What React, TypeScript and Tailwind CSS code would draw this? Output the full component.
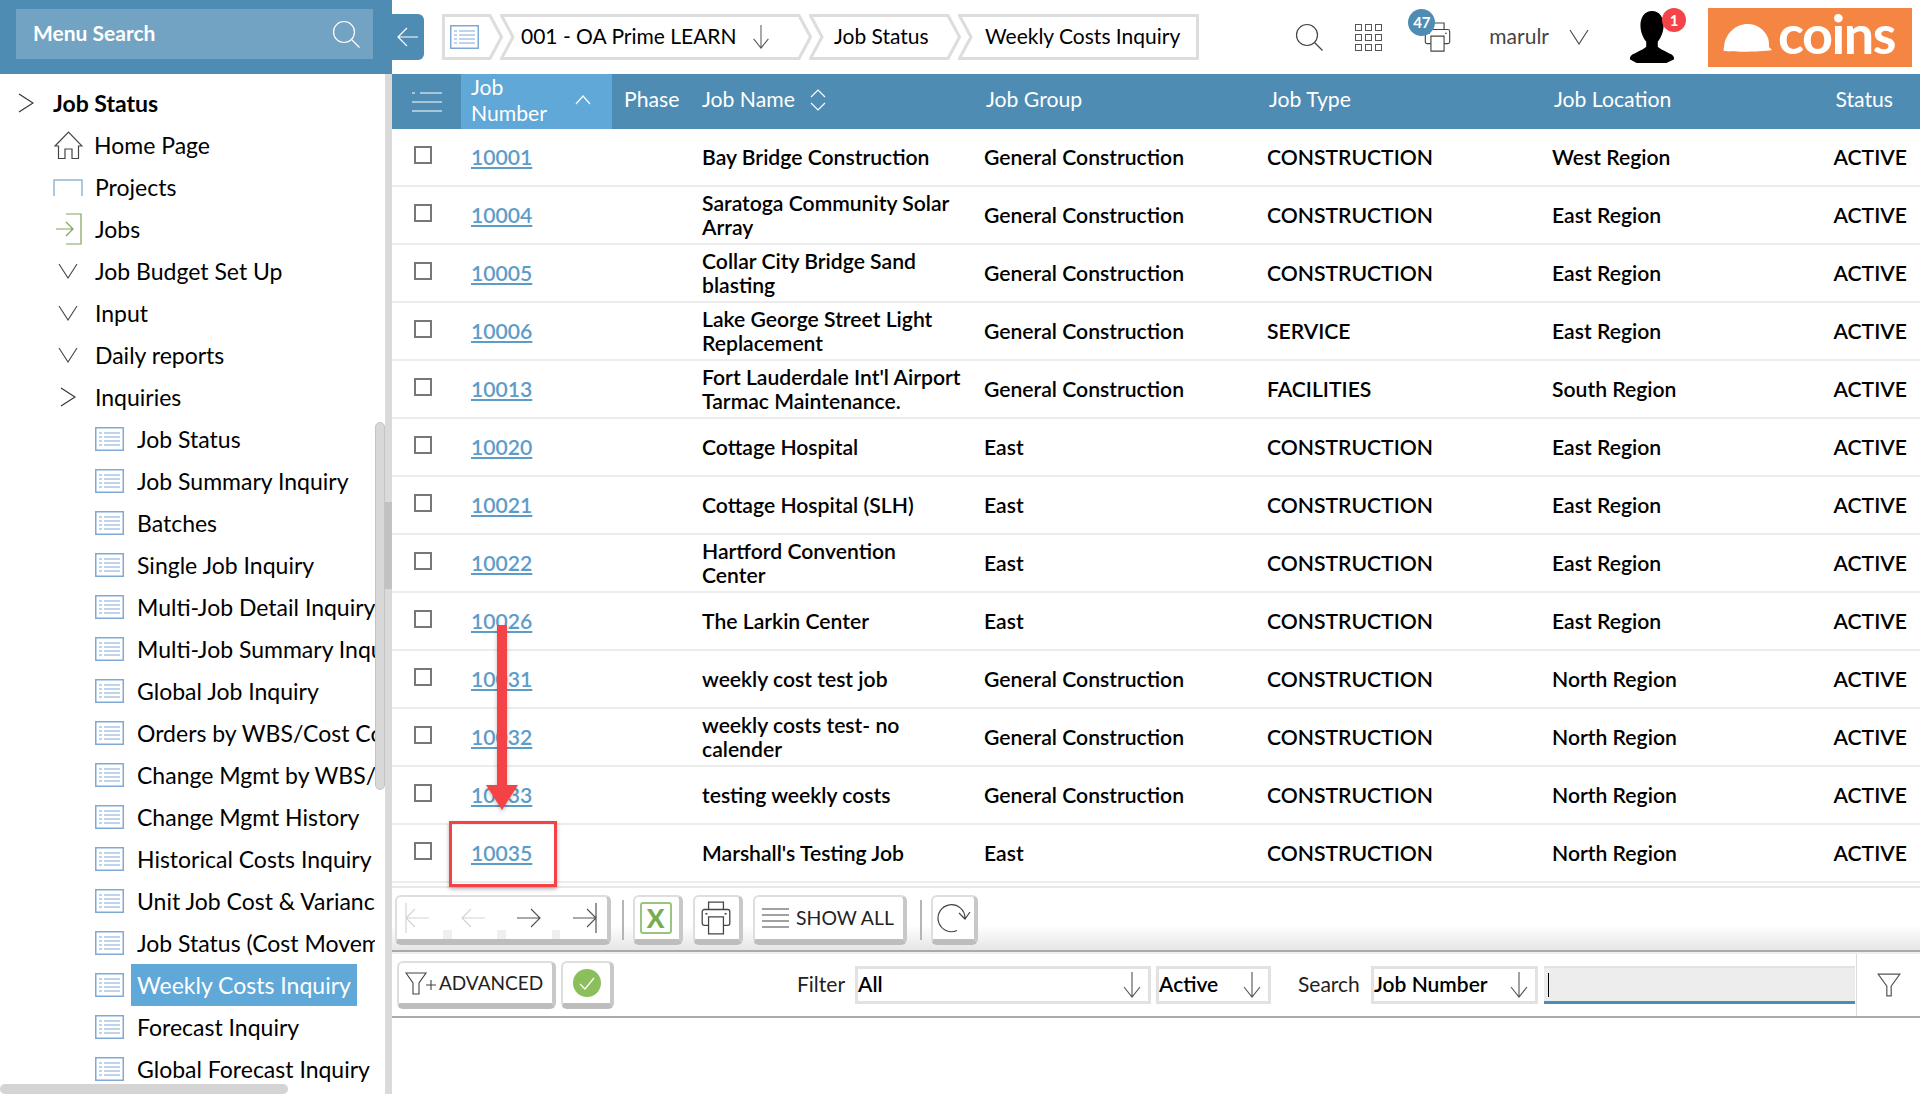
import React from 'react';

const ROW_GRID = 'grid grid-cols-[69px_151px_78px_282px_283px_285px_280px_1fr]';

const JOBS = [
  { no: '10001', name: 'Bay Bridge Construction', group: 'General Construction', type: 'CONSTRUCTION', loc: 'West Region' },
  { no: '10004', name: 'Saratoga Community Solar Array', group: 'General Construction', type: 'CONSTRUCTION', loc: 'East Region' },
  { no: '10005', name: 'Collar City Bridge Sand blasting', group: 'General Construction', type: 'CONSTRUCTION', loc: 'East Region' },
  { no: '10006', name: 'Lake George Street Light Replacement', group: 'General Construction', type: 'SERVICE', loc: 'East Region' },
  { no: '10013', name: "Fort Lauderdale Int'l Airport Tarmac Maintenance.", group: 'General Construction', type: 'FACILITIES', loc: 'South Region' },
  { no: '10020', name: 'Cottage Hospital', group: 'East', type: 'CONSTRUCTION', loc: 'East Region' },
  { no: '10021', name: 'Cottage Hospital (SLH)', group: 'East', type: 'CONSTRUCTION', loc: 'East Region' },
  { no: '10022', name: 'Hartford Convention Center', group: 'East', type: 'CONSTRUCTION', loc: 'East Region' },
  { no: '10026', name: 'The Larkin Center', group: 'East', type: 'CONSTRUCTION', loc: 'East Region' },
  { no: '10031', name: 'weekly cost test job', group: 'General Construction', type: 'CONSTRUCTION', loc: 'North Region' },
  { no: '10032', name: 'weekly costs test- no calender', group: 'General Construction', type: 'CONSTRUCTION', loc: 'North Region' },
  { no: '10033', name: 'testing weekly costs', group: 'General Construction', type: 'CONSTRUCTION', loc: 'North Region' },
  { no: '10035', name: "Marshall's Testing Job", group: 'East', type: 'CONSTRUCTION', loc: 'North Region' },
];

const INQUIRIES = [
  'Job Status',
  'Job Summary Inquiry',
  'Batches',
  'Single Job Inquiry',
  'Multi-Job Detail Inquiry',
  'Multi-Job Summary Inquiry',
  'Global Job Inquiry',
  'Orders by WBS/Cost Code',
  'Change Mgmt by WBS/Cost Code',
  'Change Mgmt History',
  'Historical Costs Inquiry',
  'Unit Job Cost & Variance',
  'Job Status (Cost Movement)',
  'Weekly Costs Inquiry',
  'Forecast Inquiry',
  'Global Forecast Inquiry',
];

const ChevronRight = () => (
  <svg width="16" height="20" viewBox="0 0 16 20" fill="none" stroke="#333" strokeWidth="1.2">
    <path d="M1 1l14 9-14 9" />
  </svg>
);

const ChevronDown = ({ w = 20, h = 16, color = '#444' }: { w?: number; h?: number; color?: string }) => (
  <svg width={w} height={h} viewBox="0 0 20 16" fill="none" stroke={color} strokeWidth="1.1">
    <path d="M1 1l9 14 9-14" />
  </svg>
);

const ArrowDown = ({ w = 18, h = 26 }: { w?: number; h?: number }) => (
  <svg width={w} height={h} viewBox="0 0 18 26" fill="none" stroke="#555" strokeWidth="1.1">
    <path d="M9 0v25M1 15l8 10 8-10" />
  </svg>
);

const ListIcon = ({ w = 29, h = 24 }: { w?: number; h?: number }) => (
  <svg width={w} height={h} viewBox="0 0 29 24" fill="none" stroke="#7fa9d6" strokeWidth="1" className="shrink-0">
    <rect x="0.75" y="0.75" width="27.5" height="22.5" strokeWidth="1.5" />
    <path d="M4 6h3M9 6h16M4 10h3M9 10h16M4 14h3M9 14h16M4 18h3M9 18h16" />
  </svg>
);

const SearchIcon = ({ color, size = 28 }: { color: string; size?: number }) => (
  <svg width={size} height={size} viewBox="0 0 28 28" fill="none" stroke={color} strokeWidth="1.2">
    <circle cx="12" cy="12" r="10.5" />
    <path d="M19.5 19.5l8 8" />
  </svg>
);

const PrinterIcon = ({ w = 29, h = 30 }: { w?: number; h?: number }) => (
  <svg width={w} height={h} viewBox="0 0 28 32" fill="none" stroke="#444" strokeWidth="1.2">
    <path d="M7 8V1h14v7M7 23H3a2 2 0 0 1-2-2V10a2 2 0 0 1 2-2h22a2 2 0 0 1 2 2v11a2 2 0 0 1-2 2h-4" />
    <path d="M7 15h14v16H7z" />
    <path d="M4 12h2M22 12h2" />
  </svg>
);

const FunnelIcon = ({ size = 22 }: { size?: number }) => (
  <svg width={size} height={size} viewBox="0 0 22 22" fill="none" stroke="#555" strokeWidth="1.1">
    <path d="M1 1h20l-8 11v9H9v-9z" />
  </svg>
);

const Crumb = ({ width, first, last, children }: { width: number; first?: boolean; last?: boolean; children?: React.ReactNode }) => {
  const right = last
    ? `${width - 1.5},1.5 ${width - 1.5},44.5`
    : `${width - 13},1.5 ${width - 1.5},23 ${width - 13},44.5`;
  const pts = first ? `1.5,1.5 ${right} 1.5,44.5` : `1.5,1.5 ${right} 1.5,44.5 13,23`;
  return (
    <div className="relative h-[46px] flex items-center shrink-0 -mr-[3px]" style={{ width }}>
      <svg className="absolute inset-0" width={width} height={46} fill="white" stroke="#dddddd" strokeWidth="3">
        <polygon points={pts} />
      </svg>
      <div className="relative flex items-center">{children}</div>
    </div>
  );
};

const Btn = ({ className = '', children }: { className?: string; children: React.ReactNode }) => (
  <div className={`relative flex items-center justify-center bg-white rounded-[6px] border-2 border-[#dedede] border-b-[6px] border-b-[#bdbdbd] border-r-[4px] border-r-[#c8c8c8] ${className}`}>
    {children}
  </div>
);

const Select = ({ label, className }: { label: string; className: string }) => (
  <div className={`h-[38px] flex items-center justify-between border-[3px] border-[#e2e2e2] pl-0 pr-[7px] text-[21px] font-semibold text-black ${className}`}>
    <span className="-mt-[2px]">{label}</span>
    <ArrowDown />
  </div>
);

const Sidebar = () => (
  <aside className="w-[392px] shrink-0 h-full flex flex-col relative">
    <div className="h-[74px] shrink-0 bg-[#4f8cb3] pl-4 pr-[19px] pt-[9px]">
      <div className="h-[50px] bg-[#72a3c2] flex items-center justify-between pl-[17px] pr-[13px]">
        <span className="text-[21px] font-bold text-white -mt-[3px]">Menu Search</span>
        <SearchIcon color="#ffffff" size={28} />
      </div>
    </div>
    <div className="flex-1 flex min-h-0">
      <nav className="w-[375px] overflow-hidden pt-[8px] text-[23px] text-black">
        <div className="h-[42px] flex items-center whitespace-nowrap">
          <span className="ml-[18px] w-[35px] flex"><ChevronRight /></span>
          <span className="font-bold">Job Status</span>
        </div>
        <div className="h-[42px] flex items-center whitespace-nowrap pl-[54px]">
          <svg width="29" height="29" viewBox="0 0 29 29" fill="none" stroke="#444" strokeWidth="1.2" className="mr-[11px]">
            <path d="M1 15L14.5 1 28 15h-3.5v12.5H18V18h-7v9.500H4.500V15z" />
          </svg>
          Home Page
        </div>
        <div className="h-[42px] flex items-center whitespace-nowrap pl-[53px]">
          <svg width="30" height="17" viewBox="0 0 30 17" fill="none" stroke="#8fb6d6" strokeWidth="1.5" className="mr-[12px]">
            <path d="M1 17V1h28v16" />
          </svg>
          Projects
        </div>
        <div className="h-[42px] flex items-center whitespace-nowrap pl-[55px]">
          <svg width="27" height="32" viewBox="0 0 27 32" fill="none" stroke="#7ea35c" strokeWidth="1.2" className="mr-[13px]">
            <path d="M11 1h15v30H11M1 16h17M11 9l7 7-7 7" />
          </svg>
          Jobs
        </div>
        {['Job Budget Set Up', 'Input', 'Daily reports'].map(t => (
          <div key={t} className="h-[42px] flex items-center whitespace-nowrap pl-[58px]">
            <span className="w-[37px] flex"><ChevronDown /></span>
            {t}
          </div>
        ))}
        <div className="h-[42px] flex items-center whitespace-nowrap pl-[60px]">
          <span className="w-[35px] flex"><ChevronRight /></span>
          Inquiries
        </div>
        {INQUIRIES.map(t => (
          <div key={t} className="h-[42px] flex items-center whitespace-nowrap pl-[95px]">
            <ListIcon />
            {t === 'Weekly Costs Inquiry' ? (
              <span className="ml-[7px] h-[42px] w-[226px] shrink-0 flex items-center pl-[6px] bg-[#5fa8d8] text-white">{t}</span>
            ) : (
              <span className="ml-[13px]">{t}</span>
            )}
          </div>
        ))}
      </nav>
      <div className="w-[10px] pt-[348px]">
        <div className="h-[368px] bg-[#d8d8d8] border border-[#c4c4c4] rounded-[5px]" />
      </div>
      <div className="w-[7px] bg-[#dadada] pt-[428px]">
        <div className="h-[87px] bg-[#c2c2c2]" />
      </div>
    </div>
    <div className="absolute left-0 bottom-0 w-[288px] h-[10px] bg-[#d4d4d4] rounded-[5px]" />
  </aside>
);

const TopBar = () => (
  <header className="h-[74px] shrink-0 flex items-center relative">
    <div className="w-[32px] h-[46px] bg-[#4f8cb3] rounded-r-[6px] flex items-center justify-center">
      <svg width="22" height="20" viewBox="0 0 22 20" fill="none" stroke="white" strokeWidth="1.2">
        <path d="M21 10H1M10 1l-9 9 9 9" />
      </svg>
    </div>
    <div className="ml-[18px] flex items-center">
      <Crumb width={61} first>
        <span className="ml-[8px] flex"><ListIcon w={29} h={24} /></span>
      </Crumb>
      <Crumb width={312}>
        <span className="ml-[21px] text-[21px] text-black -mt-[2px]">001 - OA Prime LEARN</span>
        <span className="ml-[15px] flex"><ArrowDown w={18} h={24} /></span>
      </Crumb>
      <Crumb width={152}>
        <span className="ml-[25px] text-[21px] text-black -mt-[2px]">Job Status</span>
      </Crumb>
      <Crumb width={241} last>
        <span className="ml-[27px] text-[21px] text-black -mt-[2px]">Weekly Costs Inquiry</span>
      </Crumb>
    </div>
    <div className="ml-auto flex items-center mr-[8px]">
      <SearchIcon color="#444" />
      <div className="ml-[32px] grid grid-cols-3 gap-[3px]">
        {Array.from({ length: 9 }).map((_, i) => (
          <span key={i} className="w-[7px] h-[7px] border border-[#555]" />
        ))}
      </div>
      <div className="ml-[41px] relative">
        <PrinterIcon />
        <span className="absolute -left-[15px] -top-[13px] w-[27px] h-[27px] rounded-full bg-[#4f8cb3] text-white text-[15px] font-bold flex items-center justify-center">47</span>
      </div>
      <span className="ml-[37px] text-[21px] text-[#444] -mt-[2px]">marulr</span>
      <span className="ml-[20px] flex"><ChevronDown /></span>
      <div className="ml-[40px] relative">
        <svg width="46" height="52" viewBox="0 0 46 54" fill="black">
          <path d="M23 0c8 0 12 7 12 15 0 7-3 13-6 17v5c3 3 9 5 14 8 2 1 3 3 3 5l-8 4H7l-7-4c0-2 1-4 3-5 5-3 11-5 14-8v-5c-3-4-6-10-6-17C11 7 15 0 23 0z" />
        </svg>
        <span className="absolute left-[33px] -top-[3px] w-[24px] h-[24px] rounded-full bg-[#f4444a] text-white text-[15px] font-bold flex items-center justify-center">1</span>
      </div>
      <div className="ml-[33px] w-[204px] h-[59px] bg-[#f58543] flex items-center pl-[15px] text-white overflow-hidden">
        <svg width="50" height="29" viewBox="0 0 50 29" fill="white" className="shrink-0">
          <path d="M1 28c-1-1 0-3 0-4C2 11 12 1 25 1c9 0 17 6 20 14 1 3 1 6 1 9l3 3c-10 2-38 2-48 1z" />
        </svg>
        <span className="ml-[5px] text-[54px] leading-[59px] font-bold tracking-[-1.5px] -mt-[8px]">coins</span>
      </div>
    </div>
  </header>
);

const JobTable = () => (
  <div className="shrink-0">
    <div className={`${ROW_GRID} h-[55px] bg-[#4f8cb3] text-white text-[21.2px] items-center`}>
      <div className="flex justify-center">
        <svg width="30" height="20" viewBox="0 0 30 20" fill="none" stroke="white" strokeWidth="1.2">
          <path d="M0 1h3M8 1h22M0 10h30M0 19h30" />
        </svg>
      </div>
      <div className="h-[55px] bg-[#5fa8d8] pl-[10px] pr-[21px] flex items-center justify-between leading-[26px]">
        <span className="w-[70px] -mt-[3px]">Job Number</span>
        <svg width="16" height="10" viewBox="0 0 16 10" fill="none" stroke="white" strokeWidth="1.2" className="-mt-[4px]">
          <path d="M1 9l7-8 7 8" />
        </svg>
      </div>
      <div className="pl-[12px] -mt-[3px]">Phase</div>
      <div className="pl-[12px] flex items-center gap-[15px] -mt-[3px]">
        Job Name
        <svg width="16" height="22" viewBox="0 0 16 22" fill="none" stroke="white" strokeWidth="1.2">
          <path d="M1 8l7-7 7 7M1 14l7 7 7-7" />
        </svg>
      </div>
      <div className="pl-[14px] -mt-[3px]">Job Group</div>
      <div className="pl-[14px] -mt-[3px]">Job Type</div>
      <div className="pl-[14px] -mt-[3px]">Job Location</div>
      <div className="text-right pr-[27px] -mt-[3px]">Status</div>
    </div>
    {JOBS.map(j => (
      <div key={j.no} className={`${ROW_GRID} h-[58px] items-center border-b-2 border-[#ececec] text-[21.15px] leading-[24px] font-semibold text-black`}>
        <div className="flex pl-[22px] -mt-[4px]">
          <span className="w-[18px] h-[18px] border-2 border-[#777] bg-white" />
        </div>
        <a href="#" className="pl-[10px] text-[#5e9cc8] underline">{j.no}</a>
        <div />
        <div className="pl-[12px] pr-[10px]">{j.name}</div>
        <div className="pl-[12px]">{j.group}</div>
        <div className="pl-[12px]">{j.type}</div>
        <div className="pl-[12px]">{j.loc}</div>
        <div className="text-right pr-[13px]">ACTIVE</div>
      </div>
    ))}
  </div>
);

const Toolbar = () => (
  <div className="mt-[3px] h-[66px] shrink-0 flex items-center pl-[3px] pt-[2px] bg-gradient-to-b from-white from-60% to-[#e6e6e6] border-t-2 border-t-[#e8e8e8] border-b-2 border-[#aaaaaa]">
    <Btn className="w-[216px] h-[50px]">
      <div className="w-full flex items-center justify-between pl-[8px] pr-[10px]">
        <svg width="24" height="30" viewBox="0 0 24 30" fill="none" stroke="#d4d4d4" strokeWidth="1.2"><path d="M1 0v30M24 15H1M10 6l-9 9 9 9" /></svg>
        <svg width="24" height="22" viewBox="0 0 24 22" fill="none" stroke="#d4d4d4" strokeWidth="1.2"><path d="M24 11H1M10 2l-9 9 9 9" /></svg>
        <svg width="24" height="22" viewBox="0 0 24 22" fill="none" stroke="#555" strokeWidth="1.2"><path d="M0 11h23M14 2l9 9-9 9" /></svg>
        <svg width="24" height="30" viewBox="0 0 24 30" fill="none" stroke="#555" strokeWidth="1.2"><path d="M23 0v30M0 15h23M14 6l9 9-9 9" /></svg>
      </div>
      <span className="absolute left-[46px] bottom-0 w-[9px] h-[9px] bg-[#efefef]" />
      <span className="absolute left-[100px] bottom-0 w-[9px] h-[9px] bg-[#efefef]" />
      <span className="absolute left-[155px] bottom-0 w-[8px] h-[9px] bg-[#efefef]" />
    </Btn>
    <span className="ml-[11px] w-[2px] h-[40px] bg-[#b5b5b5]" />
    <Btn className="ml-[9px] w-[50px] h-[50px]">
      <span className="mr-[3px] w-[32px] h-[32px] border-2 border-[#9ac57e] rounded-[3px] flex items-center justify-center text-[#78ad4e] text-[26px] font-black leading-none">X</span>
    </Btn>
    <Btn className="ml-[10px] w-[50px] h-[50px]"><span className="mr-[3px] flex"><PrinterIcon w={30} h={34} /></span></Btn>
    <Btn className="ml-[10px] w-[154px] h-[50px] gap-[7px] pr-[2px] text-[19.400px] text-[#222]">
      <svg width="27" height="22" viewBox="0 0 27 22" fill="none" stroke="#444" strokeWidth="1.2"><path d="M0 2h27M0 8h27M0 14h27M0 20h27" /></svg>
      SHOW ALL
    </Btn>
    <span className="ml-[13px] w-[2px] h-[40px] bg-[#b5b5b5]" />
    <Btn className="ml-[9px] w-[47px] h-[50px]">
      <svg width="34" height="30" viewBox="0 0 34 30" fill="none" stroke="#444" strokeWidth="1.2"><path d="M20 27.500A13.500 13.500 0 1 1 28 15M22 10l6 6 5-7" /></svg>
    </Btn>
  </div>
);

const FilterBar = () => (
  <div className="h-[66px] shrink-0 flex items-center border-t-2 border-t-[#eeeeee] border-b-2 border-[#aaaaaa] pl-[5px]">
    <Btn className="w-[159px] h-[48px] gap-[2px] pr-[3px] text-[19px] text-[#222]">
      <svg width="32" height="24" viewBox="0 0 32 24" fill="none" stroke="#444" strokeWidth="1.1"><path d="M1 2h20l-7 10v11H8V12zM21 14h10M26 9v10" /></svg>
      ADVANCED
    </Btn>
    <Btn className="ml-[5px] w-[53px] h-[48px]">
      <span className="w-[28px] h-[28px] rounded-full bg-[#8bbf5c] flex items-center justify-center">
        <svg width="16" height="13" viewBox="0 0 16 13" fill="none" stroke="white" strokeWidth="1.2"><path d="M1 7l5 5 9-11" /></svg>
      </span>
    </Btn>
    <span className="ml-[183px] w-[58px] text-[21px] text-[#222] -mt-[2px]">Filter</span>
    <Select label="All" className="w-[296px]" />
    <Select label="Active" className="ml-[5px] w-[115px]" />
    <span className="ml-[27px] w-[73px] text-[21px] text-[#222] -mt-[2px]">Search</span>
    <Select label="Job Number" className="w-[167px]" />
    <div className="ml-[6px] w-[311px] h-[38px] bg-[#ededed] border-t-2 border-[#e2e2e2] border-b-[3px] border-b-[#4f8cb3] flex items-center pl-[4px]">
      <span className="w-[1px] h-[24px] bg-black" />
    </div>
    <div className="self-stretch ml-[1px] flex-1 flex items-center justify-center border-l border-[#dddddd]">
      <FunnelIcon size={24} />
    </div>
  </div>
);

const App: React.FC = () => {
  return (
    <div className="relative w-[1920px] h-[1094px] overflow-hidden flex bg-white font-['Lato',sans-serif]">
      <Sidebar />
      <main className="flex-1 min-w-0 flex flex-col">
        <TopBar />
        <JobTable />
        <Toolbar />
        <FilterBar />
      </main>

      {/* annotations drawn over the screenshot */}
      <svg className="absolute left-[480px] top-[620px] drop-shadow-[0_2px_2px_rgba(0,0,0,0.25)]" width="44" height="200" viewBox="0 0 44 200" fill="#f44347">
        <path d="M17 5h10v160h11l-16 25-16-25h11z" />
      </svg>
      <div className="absolute left-[449px] top-[821px] w-[108px] h-[66px] border-[3px] border-[#f44347] shadow-[0_2px_4px_rgba(0,0,0,0.3)]" />
    </div>
  );
};

export default App;
